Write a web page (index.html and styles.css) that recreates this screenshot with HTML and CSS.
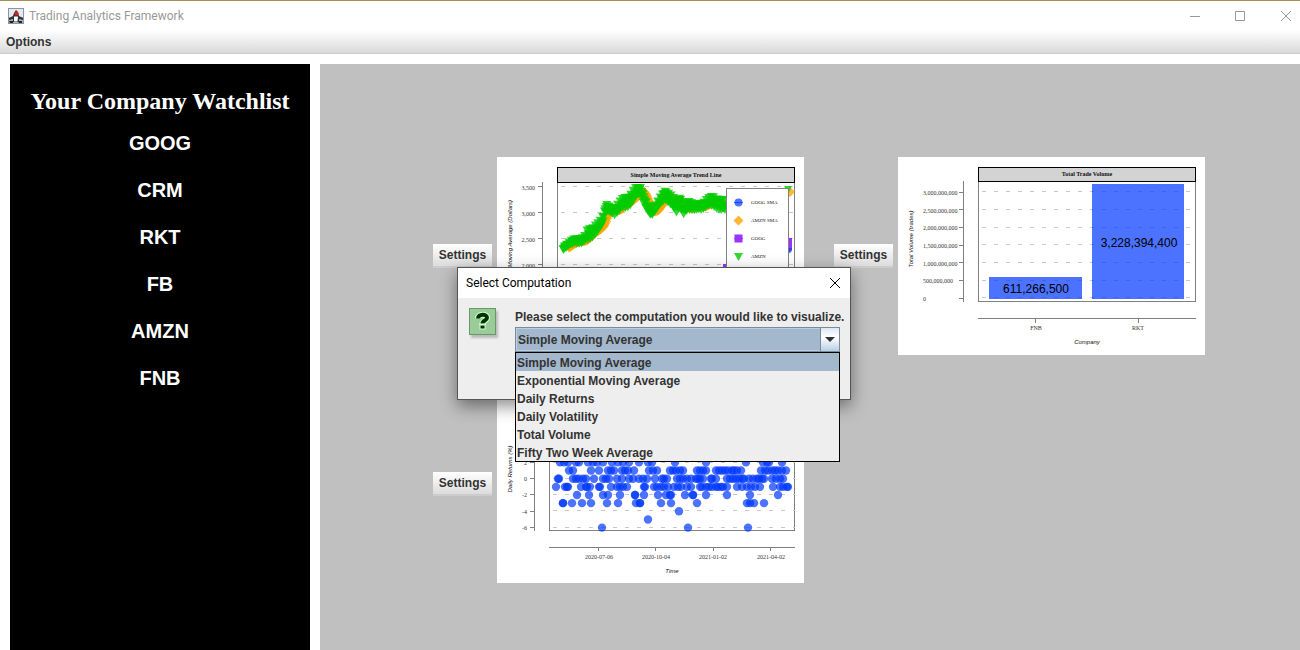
FILE: index.html
```html
<!DOCTYPE html>
<html lang="en">
<head>
<meta charset="utf-8">
<title>Trading Analytics Framework</title>
<link rel="stylesheet" href="styles.css">
</head>
<body>
<header class="titlebar">
  <svg class="app-icon" width="16" height="16" viewBox="0 0 16 16" aria-hidden="true">
    <rect x="0.500" y="0.500" width="15" height="15" fill="#e4eaf0" stroke="#8795a6"/>
    <path d="M1 9h14v6H1z" fill="#a9b6c4"/>
    <path d="M1 10l4-2 1-3 2-3 2 2 1 4 4 2v2l-4-1v3H5v-3l-4 1z" fill="#333"/>
    <path d="M6 8.500h4l-.5 5H6z" fill="#fff"/>
    <path d="M1 13h4v2H2zM10 13h4v2h-3z" fill="#222"/>
    <circle cx="8.500" cy="5.500" r="2" fill="#e02020"/>
  </svg>
  <h1 class="app-title">Trading Analytics Framework</h1>
  <div class="window-controls">
    <button class="window-button" aria-label="Minimize"><svg width="10" height="10" viewBox="0 0 10 10"><path d="M0 5.500h10"/></svg></button>
    <button class="window-button" aria-label="Maximize"><svg width="10" height="10" viewBox="0 0 10 10"><path d="M.5.5h9v9h-9z"/></svg></button>
    <button class="window-button" aria-label="Close"><svg width="10" height="10" viewBox="0 0 10 10"><path d="M0 0l10 10M10 0L0 10"/></svg></button>
  </div>
</header>
<nav class="menubar"><button class="menu">Options</button></nav>

<main class="workspace">
  <aside class="watchlist">
    <h2 class="watchlist-title">Your Company Watchlist</h2>
    <ul class="tickers">
      <li>GOOG</li><li>CRM</li><li>RKT</li><li>FB</li><li>AMZN</li><li>FNB</li>
    </ul>
  </aside>

  <section class="board">
    <article class="card">
      <button class="settings">Settings</button>
      <svg class="chart" width="307" height="198" viewBox="0 0 307 198" role="img" aria-label="Simple Moving Average Trend Line">
        <rect class="frame" x="60.500" y="25.500" width="237" height="120"/>
        <path class="grid" d="M61 29.500h237M61 55.500h237M61 81.500h237M61 107.500h237"/>
        <path class="axis" d="M45.500 25v120M41 29.500h4M41 55.500h4M41 81.500h4M41 107.500h4"/>
        <g class="tick end"><text x="38" y="33">3,500</text><text x="38" y="59">3,000</text><text x="38" y="85">2,500</text><text x="38" y="111">2,000</text></g>
        <text class="axis-title end" transform="translate(15 43) rotate(-90)">Simple Moving Average (Dollars)</text>
        <g id="trend"></g>
        <path class="purple" d="M226 107h6v6h-6zM289 81h6v11l-3 3h-3z"/>
        <path class="blue" d="M291 91h4v3l-2 2h-2z"/>
        <rect class="strip" x="60.500" y="10.500" width="237" height="15"/>
        <text class="strip-title" x="179" y="20">Simple Moving Average Trend Line</text>
        <rect class="legend" x="229.500" y="31.500" width="62" height="100"/>
        <circle class="blue" cx="241.500" cy="45.500" r="4"/>
        <path class="blue" d="M237 45h9v1h-9z"/>
        <path class="orange" d="M241.500 58.500l5 5-5 5-5-5zM237 63h9v1h-9z"/>
        <path class="purple" d="M237.500 77.500h8v8h-8zM237 81h9v1h-9z"/>
        <path class="green" d="M237 96h9l-4.500 8z"/>
        <g class="legend-text"><text x="254" y="47">GOOG SMA</text><text x="254" y="65">AMZN SMA</text><text x="254" y="83">GOOG</text><text x="254" y="101">AMZN</text></g>
      </svg>
    </article>

    <article class="card">
      <button class="settings">Settings</button>
      <svg class="chart" width="307" height="198" viewBox="0 0 307 198" role="img" aria-label="Total Trade Volume">
        <rect class="frame" x="80.500" y="24.500" width="217" height="120"/>
        <path class="grid" d="M81 34.500h217M81 52.500h217M81 70.500h217M81 87.500h217M81 105.500h217M81 123.500h217M81 140.500h217"/>
        <rect class="blue" x="91" y="120" width="93" height="22"/>
        <rect class="blue" x="194" y="27" width="92" height="115"/>
        <path class="axis" d="M65.500 24v121M61 35.500h4M61 52.500h4M61 70.500h4M61 88.500h4M61 105.500h4M61 123.500h4M61 141.500h4M80 161.500h218M137.500 161v5M240.500 161v5"/>
        <g class="tick"><text x="25" y="38">3,000,000,000</text><text x="25" y="56">2,500,000,000</text><text x="25" y="73">2,000,000,000</text><text x="25" y="91">1,500,000,000</text><text x="25" y="109">1,000,000,000</text><text x="25" y="126">500,000,000</text><text x="25" y="144">0</text></g>
        <g class="tick middle"><text x="138" y="173">FNB</text><text x="240" y="173">RKT</text></g>
        <text class="axis-title" transform="translate(15 82) rotate(-90)">Total Volume (trades)</text>
        <text class="axis-title" x="189" y="187">Company</text>
        <rect class="strip" x="80.500" y="10.500" width="217" height="14"/>
        <text class="strip-title" x="189" y="19">Total Trade Volume</text>
        <text class="bar-value" x="138" y="136">611,266,500</text>
        <text class="bar-value" x="241" y="90">3,228,394,400</text>
      </svg>
    </article>

    <article class="card">
      <button class="settings">Settings</button>
      <svg class="chart" width="307" height="198" viewBox="0 0 307 198" role="img" aria-label="Daily Returns">
        <rect class="frame" x="52.500" y="25.500" width="245" height="120"/>
        <path class="grid" d="M53 77.500h245M53 93.500h245M53 109.500h245M53 125.500h245M53 142.500h245"/>
        <path class="axis" d="M37.500 25v121M33 77.500h4M33 93.500h4M33 109.500h4M33 126.500h4M33 142.500h4M52 162.500h246M101.500 162v4M158.500 162v4M216.500 162v4M273.500 162v4"/>
        <g class="tick end"><text x="30" y="80">2</text><text x="30" y="96">0</text><text x="30" y="112">-2</text><text x="30" y="129">-4</text><text x="30" y="145">-6</text></g>
        <g class="tick middle"><text x="102" y="174">2020-07-06</text><text x="159" y="174">2020-10-04</text><text x="216" y="174">2021-01-02</text><text x="274" y="174">2021-04-02</text></g>
        <text class="axis-title" transform="translate(15 84) rotate(-90)">Daily Returns (%)</text>
        <text class="axis-title" x="175" y="188">Time</text>
        <g id="returns"></g>
      </svg>
    </article>
  </section>
</main>

<div class="dialog" role="dialog" aria-labelledby="dialog-title">
  <div class="dialog-bar">
    <h2 class="dialog-title" id="dialog-title">Select Computation</h2>
    <button class="dialog-close" aria-label="Close"><svg width="10" height="10" viewBox="0 0 10 10"><path d="M0 0l10 10M10 0L0 10"/></svg></button>
  </div>
  <div class="dialog-body">
    <svg class="question" width="32" height="32" viewBox="0 0 32 32" aria-hidden="true">
      <rect class="question-shadow" x="2" y="3" width="27" height="27"/>
      <rect x="0.500" y="0.500" width="26" height="26" fill="#99cc99" stroke="#669966"/>
      <g fill="none">
        <path d="M9 10.500c0-5 9-5 9-.7 0 3-4.500 2.500-4.500 6.200M13.500 17.500v4" stroke="#ccffcc" stroke-width="6"/>
        <path d="M9 10.500c0-5 9-5 9-.7 0 3-4.500 2.500-4.500 5.700M13.500 17.500v3" stroke="#003300" stroke-width="4"/>
        <path d="M10 16.500h7" stroke="#ccffcc" stroke-width="1.500"/>
      </g>
    </svg>
    <div class="field">
      <label for="computation">Please select the computation you would like to visualize.</label>
      <div class="combo">
        <select id="computation">
          <option>Simple Moving Average</option><option>Exponential Moving Average</option><option>Daily Returns</option><option>Daily Volatility</option><option>Total Volume</option><option>Fifty Two Week Average</option>
        </select>
        <span class="combo-arrow"><svg width="10" height="5" viewBox="0 0 10 5"><path d="M0 0h10L5 5z" fill="#333"/></svg></span>
        <ul class="options" role="listbox" aria-label="Computation">
          <li role="option" aria-selected="true" class="selected">Simple Moving Average</li>
          <li role="option">Exponential Moving Average</li>
          <li role="option">Daily Returns</li>
          <li role="option">Daily Volatility</li>
          <li role="option">Total Volume</li>
          <li role="option">Fifty Two Week Average</li>
        </ul>
      </div>
    </div>
  </div>
</div>
<script src="charts.js"></script>
</body>
</html>
```
FILE: styles.css
```css
* { box-sizing: border-box; }
body {
  margin: 0;
  height: 100vh;
  overflow: hidden;
  display: flex;
  flex-direction: column;
  background: #fff;
  color: #333;
  font: bold 12px/18px "Liberation Sans", Arial, sans-serif;
}
button { font: inherit; color: inherit; border: 0; padding: 0; background: none; }
h1, h2, ul { margin: 0; padding: 0; }
ul { list-style: none; }

.titlebar {
  display: flex;
  align-items: center;
  height: 30px;
  padding-left: 8px;
  border-top: 1px solid #a98f55;
}
.app-title {
  margin-left: 5px;
  color: #999;
  font: 12px/16px Roboto, sans-serif;
}
.window-controls { display: flex; margin-left: auto; }
.window-button { width: 45px; height: 29px; padding-left: 17px; }
.window-button:last-child { width: 37px; padding-left: 18px; }
.window-button svg, .dialog-close svg { display: block; fill: none; stroke: #999; overflow: visible; }
.menubar {
  display: flex;
  height: 24px;
  padding: 0 6px;
  background: linear-gradient(#fff, #dadada);
  border-bottom: 1px solid #ccc;
}

.workspace { flex: 1; min-height: 0; display: flex; gap: 10px; padding: 10px 0 0 10px; }
.watchlist { width: 300px; padding-top: 22px; background: #000; color: #fff; text-align: center; }
.watchlist-title { font: bold 24px/30px "Liberation Serif", "Times New Roman", serif; }
.tickers { display: grid; gap: 23px; padding-top: 15px; font-size: 20px; line-height: 24px; }
.board {
  flex: 1;
  display: grid;
  grid-template-columns: auto auto;
  justify-content: center;
  align-content: start;
  gap: 30px;
  padding: 93px 0 0 18px;
  background: #c0c0c0;
}
.card { display: flex; align-items: center; gap: 5px; }
.settings {
  width: 59px;
  height: 24px;
  background: linear-gradient(#fff, #dcdcdc);
  border-bottom: 2px solid #ccc;
}

.chart { display: block; background: #fff; }
.frame { fill: none; stroke: #808080; }
.strip { fill: #d3d3d3; stroke: #000; }
.grid { fill: none; stroke: #c8c8c8; stroke-dasharray: 4 8; stroke-dashoffset: -3; }
.axis { fill: none; stroke: #808080; }
.tick { font: 6px "Liberation Serif", serif; fill: #333; }
.axis-title { font: italic 6px "Liberation Sans", sans-serif; fill: #111; text-anchor: middle; }
.strip-title { font: bold 6px "Liberation Serif", serif; fill: #111; text-anchor: middle; }
.legend { fill: #fff; stroke: #808080; }
.legend-text { font: 5px "Liberation Serif", serif; fill: #111; }
.bar-value { font: 12px "Liberation Sans", sans-serif; fill: #000; text-anchor: middle; }
.end { text-anchor: end; }
.middle { text-anchor: middle; }
.blue { fill: rgba(0, 56, 255, 0.7); }
.orange { fill: rgba(255, 165, 0, 0.8); }
.purple { fill: rgba(128, 0, 255, 0.8); }
.green { fill: rgba(0, 204, 0, 0.8); }

.dialog {
  position: absolute;
  left: 457px;
  top: 267px;
  width: 394px;
  height: 133px;
  background: #eee;
  border: 1px solid #555;
  box-shadow: 0 6px 16px rgba(0, 0, 0, 0.45);
}
.dialog-bar {
  display: flex;
  align-items: center;
  justify-content: space-between;
  height: 30px;
  padding: 0 10px 0 8px;
  background: #fff;
}
.dialog-title { color: #000; font: 12px/16px Roboto, sans-serif; }
.dialog-close svg { stroke: #000; }
.dialog-body { display: flex; gap: 14px; padding: 10px 10px 0 11px; }
.question { flex: none; overflow: visible; }
.question-shadow { fill: #bbb; filter: blur(1px); }
.field { flex: 1; min-width: 0; white-space: nowrap; }
.field label { display: block; height: 19px; }
.combo { position: relative; height: 25px; }
.combo select {
  appearance: none;
  display: block;
  width: 100%;
  height: 25px;
  padding: 1px 2px 0;
  border: 1px solid #7a8a99;
  border-radius: 0;
  background: #a3b8cc;
  box-shadow: inset 0 0 0 1px #b8cfe5;
  color: #333;
  font: inherit;
}
.combo-arrow {
  position: absolute;
  top: 0;
  right: 0;
  display: grid;
  place-items: center;
  width: 20px;
  height: 25px;
  border: 1px solid #7a8a99;
  background: linear-gradient(#dde8f3, #fff 40%, #b8cfe5);
  pointer-events: none;
}
.options {
  position: absolute;
  top: 100%;
  left: 0;
  right: 0;
  background: #eee;
  border: 1px solid #000;
}
.options li { height: 18px; padding-left: 1px; line-height: 20px; }
.options .selected { background: #a3b8cc; }
```
FILE: charts.js
```js
const NS = "http://www.w3.org/2000/svg";
function add(parent, tag, attrs) {
  const el = document.createElementNS(NS, tag);
  for (const key in attrs) el.setAttribute(key, attrs[key]);
  parent.appendChild(el);
}

// Daily returns: percent change -> horizontal positions of the trading days.
const returns = {
  "2": [63, 67, 71, 79, 82, 91, 96, 100, 106, 115, 121, 126, 132, 142, 151, 155, 178, 209, 249, 266, 270, 272, 285],
  "1": [72, 76, 94, 102, 111, 114, 117, 125, 128, 131, 137, 152, 156, 160, 173, 176, 179, 183, 186, 200, 203, 206, 209, 219, 222, 225, 228, 231, 235, 237, 240, 244, 264, 268, 271, 275, 278, 281, 285, 289],
  "0": [61, 62, 76, 79, 82, 86, 89, 97, 106, 109, 112, 120, 125, 132, 136, 142, 146, 150, 158, 165, 167, 170, 180, 183, 186, 190, 194, 199, 201, 203, 206, 214, 215, 219, 230, 233, 236, 239, 242, 245, 247, 252, 256, 260, 262, 265, 267, 275, 279, 283, 286],
  "-1": [59, 68, 70, 71, 84, 89, 90, 93, 102, 103, 114, 120, 123, 126, 130, 147, 148, 157, 160, 164, 167, 171, 177, 181, 184, 190, 194, 203, 205, 209, 212, 215, 219, 221, 224, 226, 230, 240, 245, 250, 254, 258, 263, 276, 283, 286, 290, 291],
  "-2": [80, 92, 106, 111, 123, 138, 138, 147, 161, 169, 173, 174, 188, 196, 196, 209, 230, 253, 281],
  "-3": [66, 66, 75, 85, 94, 110, 121, 139, 143, 143, 164, 174, 200, 250, 253, 257, 267],
  "-4": [182],
  "-5": [151],
  "-6": [105, 191, 251]
};
const returnsLayer = document.getElementById("returns");
for (const pct in returns)
  for (const x of returns[pct])
    add(returnsLayer, "circle", { class: "blue", cx: x, cy: 93.7 - pct * 8.15, r: 4.2 });

// AMZN closing price, with its moving average trailing behind it.
const price = [[66, 92], [71, 88], [78, 84], [86, 84], [91, 78], [95, 75], [101, 71], [105, 66], [109, 50], [113, 53], [118, 54], [126, 47], [133, 43], [138, 37], [143, 32], [146, 40], [150, 50], [154, 57], [161, 48], [168, 37], [173, 43], [180, 51], [183, 43], [186, 53], [193, 49], [203, 50], [216, 44], [225, 49], [229, 49]];
function priceAt(x) {
  for (let i = 1; i < price.length; i++) {
    const [x0, y0] = price[i - 1], [x1, y1] = price[i];
    if (x <= x1) return y0 + (y1 - y0) * Math.max(0, x - x0) / (x1 - x0);
  }
  return 48;
}
const trend = document.getElementById("trend");
for (let x = 72; x < 230; x++) {
  const y = (priceAt(x - 7) + priceAt(x - 4) + priceAt(x - 2)) / 3;
  add(trend, "path", { class: "orange", d: `M${x} ${y - 5}l5 5-5 5-5-5z` });
}
for (let i = 0; i < 272; i++) {
  const x = 66 + i * 0.6;
  const spread = x < 90 ? 3 : 6;
  const y = Math.max(31, priceAt(x) + spread * Math.sin(i * 2.4) * Math.cos(i * 0.7));
  add(trend, "path", { class: "green", d: `M${x - 4.5} ${y - 4}h9l-4.500 8z` });
}
add(trend, "path", { class: "orange", d: "M293 30l5 5-5 5-5-5z" });
add(trend, "path", { class: "green", d: "M287 29h8l-4 8z" });
```
